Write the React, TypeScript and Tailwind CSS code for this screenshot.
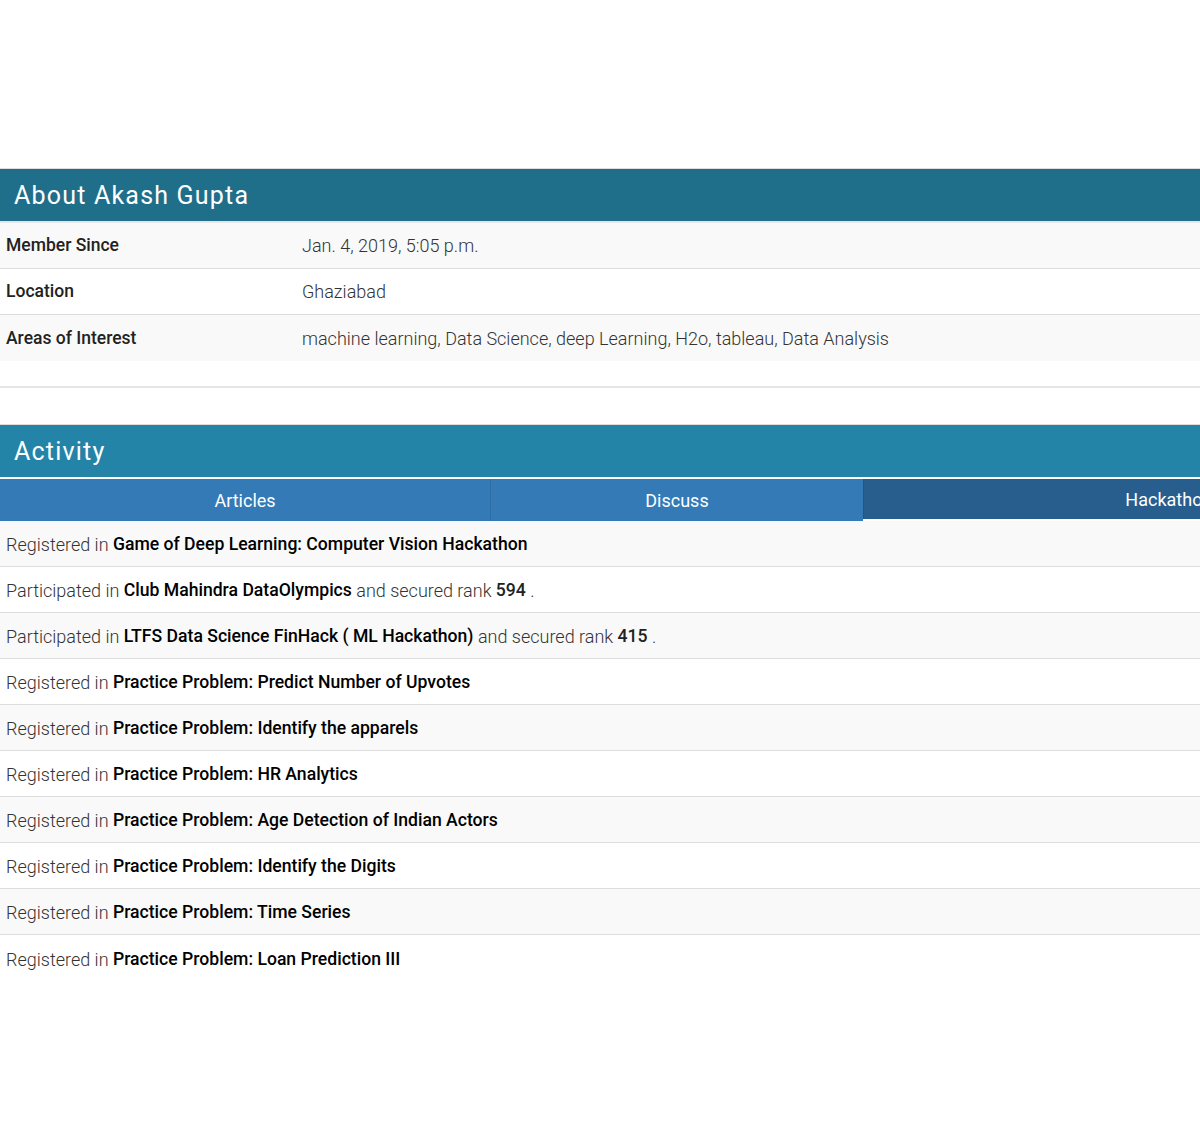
const about = [
  { label: "Member Since", value: "Jan. 4, 2019, 5:05 p.m." },
  { label: "Location", value: "Ghaziabad" },
  { label: "Areas of Interest", value: "machine learning, Data Science, deep Learning, H2o, tableau, Data Analysis" },
];

type Act = { verb: string; name: string; rank?: string };

const activity: Act[] = [
  { verb: "Registered in", name: "Game of Deep Learning: Computer Vision Hackathon" },
  { verb: "Participated in", name: "Club Mahindra DataOlympics", rank: "594" },
  { verb: "Participated in", name: "LTFS Data Science FinHack ( ML Hackathon)", rank: "415" },
  { verb: "Registered in", name: "Practice Problem: Predict Number of Upvotes" },
  { verb: "Registered in", name: "Practice Problem: Identify the apparels" },
  { verb: "Registered in", name: "Practice Problem: HR Analytics" },
  { verb: "Registered in", name: "Practice Problem: Age Detection of Indian Actors" },
  { verb: "Registered in", name: "Practice Problem: Identify the Digits" },
  { verb: "Registered in", name: "Practice Problem: Time Series" },
  { verb: "Registered in", name: "Practice Problem: Loan Prediction III" },
];

export default function App() {
  return (
    <div className="w-[1200px] h-[1142px] overflow-hidden bg-white font-['Roboto',sans-serif] text-[#333]">
      <div className="h-[168px]" />

      {/* About */}
      <div className="border-t border-[#ddd]">
        <div className="h-[52px] bg-[#1f6f8b] flex items-center px-[14px] pt-[2px] text-white text-[25px] tracking-[1.2px]">
          About Akash Gupta
        </div>
        <div className="border-t-2 border-[#e6e6e6]">
          {about.map((r, i) => (
            <div
              key={r.label}
              className={`flex items-center h-[46px] px-[6px] ${i % 2 === 0 ? "bg-[#f9f9f9]" : "bg-white"} ${i < about.length - 1 ? "border-b border-[#ddd]" : ""}`}
            >
              <div className="w-[296px] text-[17.5px] font-medium text-[#222]">{r.label}</div>
              <div className="text-[18px] font-light text-[#333]">{r.value}</div>
            </div>
          ))}
        </div>
      </div>

      <div className="h-[25px]" />
      <div className="border-t-2 border-[#e5e5e5]" />
      <div className="h-[36px]" />

      {/* Activity */}
      <div className="border-t border-[#ddd]">
        <div className="h-[52px] bg-[#2384a8] flex items-center px-[14px] pt-[2px] text-white text-[25px] tracking-[1.2px]">
          Activity
        </div>
        <div className="h-[2px] bg-white" />
        <div className="flex h-[42px] overflow-hidden text-white text-[18px]">
          <div className="w-[491px] shrink-0 bg-[#337ab7] border-r border-[#2e6da4] flex items-center justify-center">
            Articles
          </div>
          <div className="w-[372px] shrink-0 bg-[#337ab7] flex items-center justify-center">
            Discuss
          </div>
          <div className="w-[620px] shrink-0 flex flex-col">
            <div className="flex-1 bg-[#285e8e] border-l border-[#24557f] flex items-center justify-center">
              Hackathons
            </div>
            <div className="h-[2px] bg-white" />
          </div>
        </div>
        <div>
          {activity.map((a, i) => (
            <div
              key={a.name}
              className={`flex items-center h-[46px] px-[6px] pt-[2px] text-[18px] ${i % 2 === 0 ? "bg-[#f9f9f9]" : "bg-white"} ${i < activity.length - 1 ? "border-b border-[#ddd]" : ""}`}
            >
              <span className="font-light text-[#333] whitespace-pre">{a.verb} </span>
              <span className="font-medium text-black text-[17.6px]">{a.name}</span>
              {a.rank && (
                <>
                  <span className="font-light text-[#333] whitespace-pre"> and secured rank </span>
                  <span className="font-medium text-[#222] text-[17.6px]">{a.rank}</span>
                  <span className="font-light text-[#333] whitespace-pre"> .</span>
                </>
              )}
            </div>
          ))}
        </div>
      </div>
    </div>
  );
}
